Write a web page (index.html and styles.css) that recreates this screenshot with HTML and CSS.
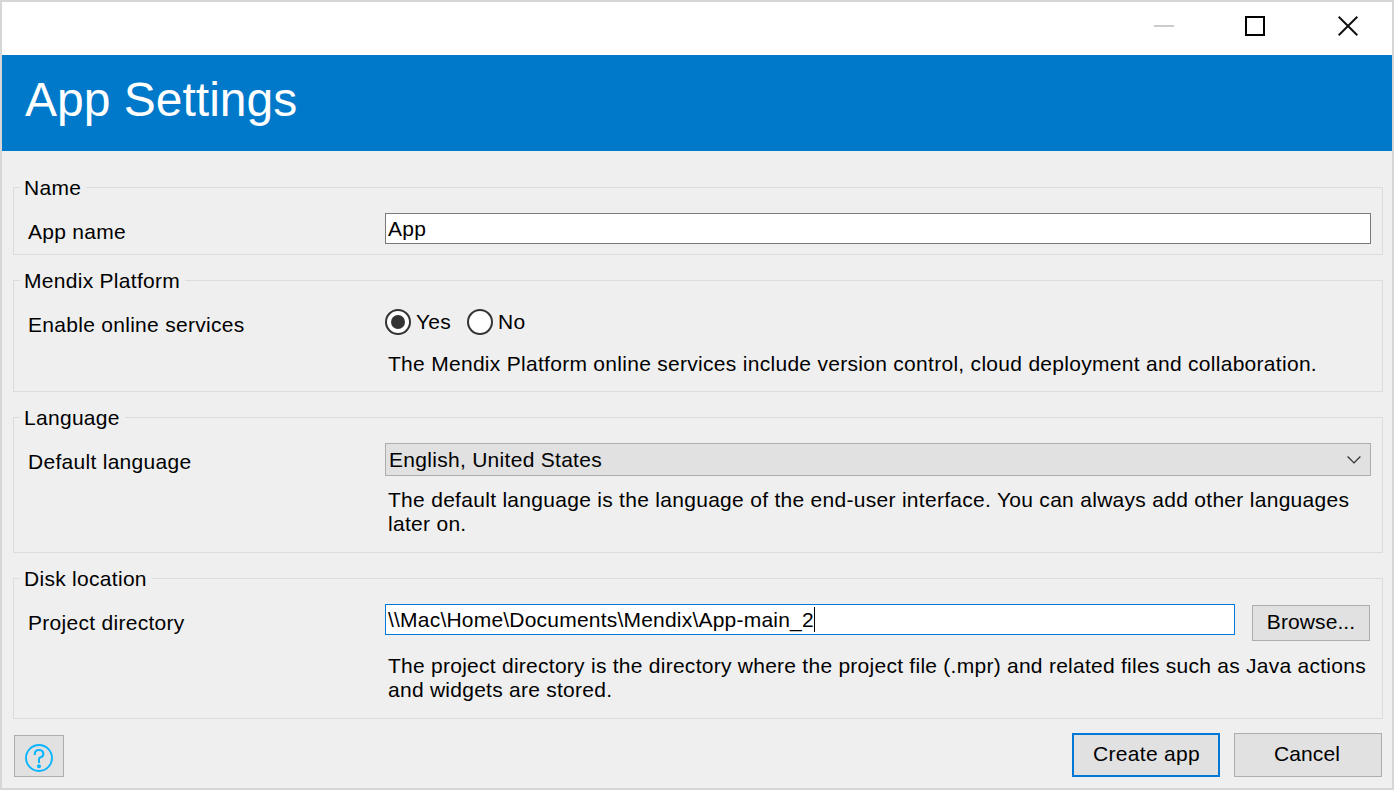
FILE: index.html
```html
<!DOCTYPE html>
<html lang="en">
<head>
<meta charset="utf-8">
<title>App Settings</title>
<link rel="stylesheet" href="styles.css">
</head>
<body>
<main class="window">
  <div class="titlebar">
    <svg class="win-icon minimize" width="20" height="20" viewBox="0 0 20 20"><path d="M0 10h20" stroke="#ccc" stroke-width="2"/></svg>
    <svg class="win-icon" width="20" height="20" viewBox="0 0 20 20"><rect x="1" y="1" width="18" height="18" fill="none" stroke="#000" stroke-width="2"/></svg>
    <svg class="win-icon" width="20" height="20" viewBox="0 0 20 20"><path d="M.7.7l18.6 18.6M19.3.7L.7 19.3" stroke="#111" stroke-width="2"/></svg>
  </div>
  <header class="banner"><h1 class="title">App Settings</h1></header>
  <div class="content">
    <section class="group group-name">
      <h2 class="legend">Name</h2>
      <div class="row">
        <span class="label">App name</span>
        <div class="field"><div class="input">App</div></div>
      </div>
    </section>
    <section class="group group-platform">
      <h2 class="legend">Mendix Platform</h2>
      <div class="row">
        <span class="label">Enable online services</span>
        <div class="field">
          <div class="radios">
            <span class="radio checked"></span><span class="radio-label yes">Yes</span>
            <span class="radio"></span><span class="radio-label">No</span>
          </div>
          <p class="hint">The Mendix Platform online services include version control, cloud deployment and collaboration.</p>
        </div>
      </div>
    </section>
    <section class="group group-language">
      <h2 class="legend">Language</h2>
      <div class="row">
        <span class="label">Default language</span>
        <div class="field">
          <div class="select"><span class="select-text">English, United States</span>
            <svg width="14" height="9" viewBox="0 0 14 9"><path d="M.6 1.500l6.400 6.400L13.400 1.500" fill="none" stroke="#333" stroke-width="1.3"/></svg>
          </div>
          <p class="hint">The default language is the language of the end-user interface. You can always add other languages<br>later on.</p>
        </div>
      </div>
    </section>
    <section class="group group-disk">
      <h2 class="legend">Disk location</h2>
      <div class="row">
        <span class="label">Project directory</span>
        <div class="field">
          <div class="path-row">
            <div class="input focused"><span class="path">\\Mac\Home\Documents\Mendix\App-main_2</span><span class="caret"></span></div>
            <div class="button browse">Browse...</div>
          </div>
          <p class="hint">The project directory is the directory where the project file (.mpr) and related files such as Java actions<br>and widgets are stored.</p>
        </div>
      </div>
    </section>
    <footer class="footer">
      <div class="button help">
        <svg width="28" height="28" viewBox="0 0 28 28"><circle cx="14" cy="14" r="13" fill="none" stroke="#0ab4ff" stroke-width="1.900"/><path d="M9.800 11V9.900C9.800 7.400 11.500 6 14 6s4.300 1.500 4.300 3.900c0 2-1.300 2.900-2.800 3.400-1 .3-1.500.9-1.500 2V19" fill="none" stroke="#0ab4ff" stroke-width="2"/><circle cx="14" cy="22.200" r="2" fill="#0ab4ff"/></svg>
      </div>
      <div class="button create">Create app</div>
      <div class="button cancel">Cancel</div>
    </footer>
  </div>
</main>
</body>
</html>
```
FILE: styles.css
```css
* { box-sizing: border-box; }
body {
  margin: 0;
  font: 21px/24px "Liberation Sans", Arial, sans-serif;
  letter-spacing: 0.29px;
  color: #000;
}
.window {
  width: 1394px;
  height: 790px;
  border: 2px solid #d6d6d6;
  background: #efefef;
  overflow: hidden;
}
.titlebar {
  height: 53px;
  background: #fff;
  display: flex;
  justify-content: flex-end;
  padding: 14px 34px 0 0;
  gap: 73px;
}
.win-icon { display: block; }
.minimize { margin-right: -2px; }
.banner {
  height: 96px;
  background: #0079ca;
  padding: 17px 0 0 23px;
}
.title {
  margin: 0;
  font-size: 48px;
  line-height: 56px;
  font-weight: 400;
  letter-spacing: 0;
  color: #fff;
}
.content { padding: 36px 9px 0 11px; }
.group {
  border: 1px solid #dcdcdc;
  margin-bottom: 25px;
  white-space: nowrap;
}
.group-name { height: 68px; }
.group-platform { height: 112px; }
.group-language { height: 136px; }
.group-disk { height: 141px; margin-bottom: 14px; }
.group-disk .hint { letter-spacing: 0.26px; }
.legend {
  width: fit-content;
  margin: -12px 0 0 6px;
  padding: 0 5px 0 4px;
  background: #efefef;
  font-size: inherit;
  font-weight: 400;
}
.row {
  display: grid;
  grid-template-columns: 357px 986px;
  padding: 13px 0 0 14px;
}
.label { padding-top: 7px; }
.input {
  height: 31px;
  flex: 1;
  border: 1px solid #7a7a7a;
  background: #fff;
  padding: 3px 2px 0;
  display: flex;
}
.focused { border-color: #0078d7; }
.path { letter-spacing: 0.21px; }
.caret { width: 1px; height: 25px; margin-top: -1px; background: #000; }
.hint { margin: 0; padding-left: 3px; }
.radios { display: flex; align-items: center; height: 26px; margin-top: 3px; }
.radio {
  width: 26px;
  height: 26px;
  border: 2px solid #333;
  border-radius: 50%;
  background: #fff;
  margin-right: 5px;
  display: grid;
  place-items: center;
}
.checked::before {
  content: "";
  width: 14px;
  height: 14px;
  border-radius: 50%;
  background: #333;
}
.yes { width: 51px; }
.radios + .hint { margin-top: 17px; }
.select {
  height: 33px;
  border: 1px solid #adadad;
  background: #e1e1e1;
  display: flex;
  align-items: center;
  justify-content: space-between;
  padding: 0 9px 0 3px;
}
.select + .hint { margin-top: 12px; }
.path-row { display: flex; gap: 17px; align-items: flex-start; padding-right: 1px; height: 37px; }
.path-row + .hint { margin-top: 13px; }
.button {
  border: 1px solid #adadad;
  background: #e1e1e1;
  display: flex;
  align-items: center;
  justify-content: center;
}
.browse { width: 118px; height: 36px; margin-top: 1px; padding-bottom: 2px; letter-spacing: 0.1px; }
.footer { display: flex; padding: 0 0 0 1px; }
.help { width: 50px; height: 42px; margin: 2px auto 0 0; padding-top: 4px; }
.create, .cancel { width: 148px; height: 44px; padding-bottom: 2px; }
.create { border: 2px solid #0078d7; margin-right: 14px; padding-left: 1px; }
.cancel { margin-right: 1px; padding-right: 2px; letter-spacing: 0.1px; }
```
